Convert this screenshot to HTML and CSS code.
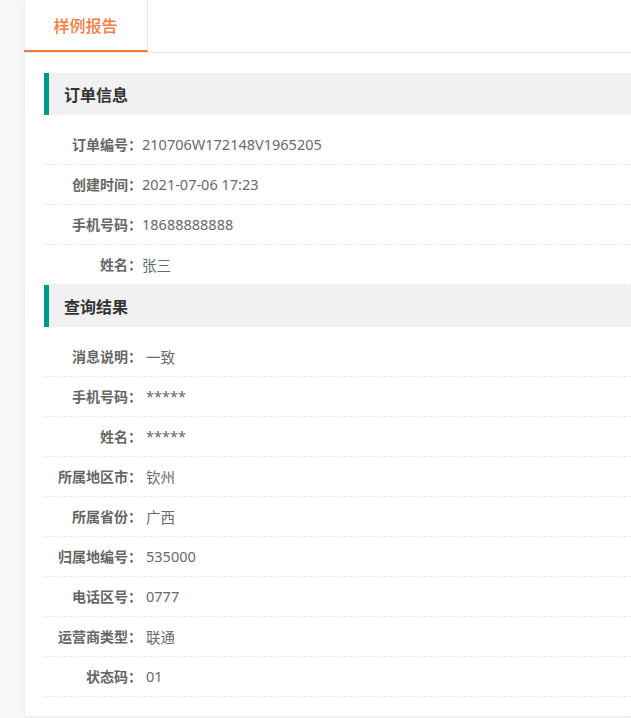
FILE: index.html
```html
<!DOCTYPE html>
<html lang="zh-CN">
<head>
<meta charset="utf-8">
<title>样例报告</title>
<link rel="stylesheet" href="styles.css">
</head>
<body>
<div class="page">
  <div class="card">
    <div class="tabs">
      <div class="tab active">样例报告</div>
    </div>
    <div class="card-body">
      <section class="block">
        <h3 class="block-title">订单信息</h3>
        <div class="rows">
          <div class="row"><span class="label">订单编号：</span><span class="value">210706W172148V1965205</span></div>
          <div class="row"><span class="label">创建时间：</span><span class="value">2021-07-06 17:23</span></div>
          <div class="row"><span class="label">手机号码：</span><span class="value">18688888888</span></div>
          <div class="row"><span class="label">姓名：</span><span class="value">张三</span></div>
        </div>
      </section>
      <section class="block">
        <h3 class="block-title">查询结果</h3>
        <div class="rows wide">
          <div class="row"><span class="label">消息说明：</span><span class="value">一致</span></div>
          <div class="row"><span class="label">手机号码：</span><span class="value">*****</span></div>
          <div class="row"><span class="label">姓名：</span><span class="value">*****</span></div>
          <div class="row"><span class="label">所属地区市：</span><span class="value">钦州</span></div>
          <div class="row"><span class="label">所属省份：</span><span class="value">广西</span></div>
          <div class="row"><span class="label">归属地编号：</span><span class="value">535000</span></div>
          <div class="row"><span class="label">电话区号：</span><span class="value">0777</span></div>
          <div class="row"><span class="label">运营商类型：</span><span class="value">联通</span></div>
          <div class="row"><span class="label">状态码：</span><span class="value">01</span></div>
        </div>
      </section>
    </div>
  </div>
</div>
</body>
</html>
```

FILE: styles.css
```css
html, body {
  margin: 0;
  padding: 0;
}

body {
  background: #f7f8fa;
  font-family: "Noto Sans", "Noto Sans CJK SC", sans-serif;
  font-size: 14px;
  color: #606266;
  overflow: hidden;
}

.page {
  padding: 0 0 0 24px;
  height: 718px;
  box-sizing: border-box;
}

.card {
  background: #fff;
  border: 1px solid #ebeef5;
  border-right: none;
  border-top: none;
  border-radius: 0 0 0 5px;
  box-shadow: 0 0 14px rgba(0, 0, 0, 0.04);
  height: 717px;
  box-sizing: border-box;
}

/* tab strip */
.tabs {
  display: flex;
  height: 53px;
  border-bottom: 1px solid #e4e7ed;
  box-sizing: border-box;
  margin-left: -1px;
}

.tab {
  width: 124px;
  height: 52px;
  box-sizing: border-box;
  border-right: 1px solid #e6e8ee;
  display: flex;
  align-items: center;
  justify-content: center;
  font-size: 16px;
  font-weight: 500;
  font-family: "Noto Sans CJK SC", sans-serif;
}

.tab.active {
  color: #fb7b42;
  border-bottom: 2px solid #f6793b;
  margin-bottom: -1px;
}

.card-body {
  padding: 20px 0 0 19px;
}

.block-title {
  margin: 0;
  height: 42px;
  line-height: 42px;
  background: #f1f1f1;
  border-left: 5px solid #009688;
  padding-left: 15px;
  font-size: 16px;
  font-weight: bold;
  color: #333;
  font-family: "Noto Sans CJK SC", sans-serif;
}

.rows {
  padding-top: 10px;
}

.row {
  display: flex;
  align-items: center;
  height: 40px;
  box-sizing: border-box;
  padding-bottom: 2px;
  background: repeating-linear-gradient(to right, #e6e9ef 0 3px, transparent 3px 5px) left bottom / 100% 1px no-repeat;
}

.label {
  width: 98px;
  text-align: right;
  font-weight: bold;
  color: #666;
  font-family: "Noto Sans CJK SC", sans-serif;
  font-size: 14px;
}

.value {
  color: #666a70;
  font-size: 14.5px;
}

.rows.wide .value {
  padding-left: 4px;
}
```
